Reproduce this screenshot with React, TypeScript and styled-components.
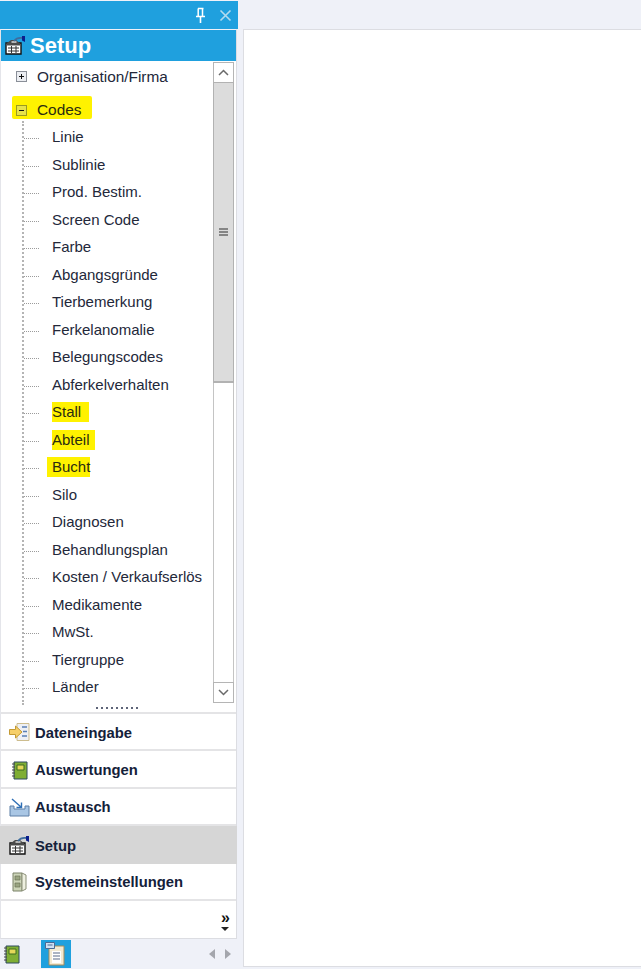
import React from 'react'
import styled, { createGlobalStyle } from 'styled-components'

const GlobalStyle = createGlobalStyle`
  html, body {
    margin: 0;
    padding: 0;
    background: #fff;
  }
  * {
    box-sizing: border-box;
  }
`

const Page = styled.div`
  width: 641px;
  height: 972px;
  display: flex;
  flex-direction: column;
  background: #fff;
  font-family: 'Liberation Sans', Arial, sans-serif;
  overflow: hidden;
`

const Desktop = styled.div`
  height: 969px;
  display: flex;
  background: #eff1f8;
`

const Sidebar = styled.div`
  width: 238px;
  display: flex;
  flex-direction: column;
`

const TitleBar = styled.div`
  height: 28px;
  margin-top: 1px;
  display: flex;
  align-items: center;
  justify-content: flex-end;
  gap: 13px;
  padding-right: 6px;
  background: #1fa0de;
`

const Panel = styled.div`
  height: 910px;
  margin-right: 1px;
  display: flex;
  flex-direction: column;
  background: #fff;
  border: 1px solid #dcdde2;
  border-top: 1px solid #eff1f8;
  border-left: 1px solid #e4e5ea;
`

const Header = styled.div`
  height: 31px;
  flex: none;
  display: flex;
  align-items: center;
  gap: 4px;
  padding-left: 4px;
  background: #1fa0de;
  color: #fff;
  font-size: 22px;
  font-weight: 700;
`

const TreeArea = styled.div`
  height: 653px;
  flex: none;
  position: relative;
  display: flex;
  overflow: hidden;
  border-bottom: 2px solid #e4e4e6;
`

const Tree = styled.div`
  flex: 1;
  min-width: 0;
  padding-top: 2px;
`

const RootRow = styled.div<{ $top?: number }>`
  height: 27px;
  margin-top: ${p => p.$top ?? 0}px;
  display: flex;
  align-items: center;
  padding-left: 15px;
  gap: 10px;
  font-size: 15.4px;
  color: #23283a;
`

const MarkedRoot = styled(RootRow)`
  width: 80px;
  height: 23px;
  margin-left: 11px;
  padding: 5px 0 0 4px;
  background: #fff200;
  border-radius: 2px;
  color: #2b2c10;
`

const Expander = styled.span<{ $marked?: boolean }>`
  position: relative;
  width: 11px;
  height: 11px;
  flex: none;
  border: 1px solid ${p => (p.$marked ? '#9a9a20' : '#8a8f98')};
  background: ${p => (p.$marked ? '#e6e24a' : '#eceef2')};
`

const Minus = styled.span`
  position: absolute;
  left: 2px;
  top: 4px;
  width: 5px;
  height: 1px;
  background: #111;
`

const Plus = styled(Minus)`
  &::after {
    content: '';
    position: absolute;
    left: 2px;
    top: -2px;
    width: 1px;
    height: 5px;
    background: #111;
  }
`

const Leaves = styled.div`
  margin: 2px 0 0 21px;
  border-left: 2px dotted #b4b4b4;
  height: 584px;
  padding-top: 2.5px;
`

const Leaf = styled.div`
  height: 27.5px;
  display: flex;
  align-items: center;
  font-size: 15px;
  color: #23283a;
  white-space: nowrap;
`

const Branch = styled.span`
  width: 15px;
  height: 1px;
  flex: none;
  margin: 3px 13px 0 0;
  border-bottom: 1px dotted #9b9b9b;
`

const LeafLabel = styled.span<{ $marked?: boolean; $offset?: number; $extra?: number }>`
  padding: 1px ${p => p.$extra ?? 0}px 2px 0;
  margin-left: ${p => p.$offset ?? 0}px;
  padding-left: ${p => -(p.$offset ?? 0)}px;
  background: ${p => (p.$marked ? '#fff200' : 'transparent')};
  color: ${p => (p.$marked ? '#2b2c10' : 'inherit')};
`

const Scrollbar = styled.div`
  width: 21px;
  height: 641px;
  margin: 1px 2px 0 0;
  flex: none;
  display: flex;
  flex-direction: column;
`

const ScrollButton = styled.div`
  height: 21px;
  flex: none;
  display: flex;
  align-items: center;
  justify-content: center;
  background: #fff;
  border: 1px solid #b5b5b5;
  color: #6a6a6a;
`

const Thumb = styled.div`
  height: 301px;
  flex: none;
  display: flex;
  flex-direction: column;
  align-items: center;
  justify-content: center;
  gap: 1px;
  margin-top: -1px;
  background: #dcdcdc;
  border: 1px solid #b2b2b2;
  border-bottom-width: 2px;
`

const Grip = styled.span`
  width: 9px;
  height: 2px;
  background: #858585;
`

const Track = styled.div`
  flex: 1;
  border-left: 1px solid #c4c4c4;
  border-right: 1px solid #c4c4c4;
`

const DragHandle = styled.div`
  position: absolute;
  left: 95px;
  bottom: 3px;
  width: 44px;
  height: 2px;
  background: repeating-linear-gradient(90deg, #5d6478 0 2px, transparent 2px 5px);
`

const NavRow = styled.div<{ $active?: boolean }>`
  height: 37.4px;
  flex: none;
  display: flex;
  align-items: center;
  gap: 5px;
  padding-top: 2px;
  margin: ${p => (p.$active ? '0 -1px 0 -1px' : '0')};
  padding-left: ${p => (p.$active ? 9 : 8)}px;
  background: ${p => (p.$active ? '#d6d6d6' : '#fff')};
  border-bottom: ${p => (p.$active ? 'none' : '2px solid #e4e4e6')};
  font-size: 14.8px;
  font-weight: 700;
  color: #14213a;
`

const NavIcon = styled.span`
  width: 21px;
  height: 21px;
  flex: none;
  display: flex;
  align-items: center;
  justify-content: center;
`

const MoreRow = styled.div`
  flex: 1;
  display: flex;
  flex-direction: column;
  align-items: flex-end;
  justify-content: flex-end;
  padding: 0 6px 7px 0;
`

const MoreChevrons = styled.span`
  font-size: 16px;
  font-weight: 700;
  line-height: 10px;
  color: #111;
`

const MoreArrow = styled.span`
  margin: 4px 1px 0 0;
  border-left: 4px solid transparent;
  border-right: 4px solid transparent;
  border-top: 4px solid #222;
`

const StatusBar = styled.div`
  height: 30px;
  display: flex;
  align-items: center;
  padding-left: 3px;
`

const StatusTab = styled.div`
  width: 30px;
  height: 28px;
  margin-left: 21px;
  display: flex;
  align-items: center;
  justify-content: center;
  padding-right: 3px;
  background: #1fa0de;
`

const Arrows = styled.div`
  margin-left: auto;
  display: flex;
  gap: 10px;
  padding-right: 7px;
`

const ArrowLeft = styled.span`
  border-top: 5px solid transparent;
  border-bottom: 5px solid transparent;
  border-right: 6px solid #a4a6ad;
`

const ArrowRight = styled.span`
  border-top: 5px solid transparent;
  border-bottom: 5px solid transparent;
  border-left: 6px solid #a4a6ad;
`

const Workspace = styled.div`
  flex: 1;
  display: flex;
  flex-direction: column;
  padding: 29px 0 2px 5px;
`

const Document = styled.div`
  flex: 1;
  background: #fff;
  border: 1px solid #dcdde2;
  border-right: none;
`

const PinIcon = () => (
  <svg width="11" height="16" viewBox="0 0 11 16">
    <path d="M3 1.500h5.500M3.200 1.500v8M7.500 1.500v8" stroke="#fff" strokeWidth="1.5" fill="none" />
    <path d="M1 9.500h9M5.500 10v6" stroke="#fff" strokeWidth="1.6" fill="none" />
  </svg>
)

const CloseIcon = () => (
  <svg width="13" height="13" viewBox="0 0 13 13">
    <path d="M1.500 1.500l10 10M11.500 1.500l-10 10" stroke="#b4dbee" strokeWidth="1.6" fill="none" />
  </svg>
)

const SetupIcon = () => (
  <svg width="21" height="19" viewBox="0 0 21 19">
    <path d="M1 7h15v11H1z" fill="#fff" stroke="#111" strokeWidth="1.4" />
    <path d="M1.500 7.500L6 4h5l4 3.500v2H1.500z" fill="#4a4a4a" />
    <path d="M6.500 6h5" stroke="#fff" strokeWidth="1.2" />
    <path d="M3 12h11M3 15h11M6.500 10v7M11 10v7" stroke="#333" strokeWidth="1" fill="none" />
    <path d="M9 5c2-2.500 5-3.500 8-3" stroke="#3e6d9e" strokeWidth="1.8" fill="none" />
    <path d="M17 0h3v6l-3-1.500z" fill="#0b1f8c" />
  </svg>
)

const EntryIcon = () => (
  <svg width="21" height="19" viewBox="0 0 21 19">
    <path d="M8 .5h12v17H8z" fill="#eef0f4" stroke="#cdbd8e" />
    <path d="M13 4h5M14 8.500h4M13 13h5" stroke="#5a7fb5" strokeWidth="1.4" />
    <path d="M.5 6.500h6V3l6.500 6-6.500 6v-3.500h-6z" fill="#f6cf6a" stroke="#c39a35" />
  </svg>
)

const BookIcon = () => (
  <svg width="17" height="19" viewBox="0 0 17 19">
    <path d="M3 1h13v17H3z" fill="#7fae34" stroke="#2f4a5e" />
    <path d="M6 4h7v5H6z" fill="#e4d85a" stroke="#3d6a20" />
    <path d="M1 3h3M1 6h3M1 9h3M1 12h3M1 15h3" stroke="#444" strokeWidth="1" />
  </svg>
)

const ExchangeIcon = () => (
  <svg width="21" height="19" viewBox="0 0 21 19">
    <path d="M1 8h4v3h11V8h4v10H1z" fill="#a9c6e4" stroke="#5c7ea6" />
    <path d="M3 1l9 8M7.500 9.500h5V4.500" stroke="#2f6fb5" strokeWidth="1.4" fill="none" />
  </svg>
)

const CabinetIcon = () => (
  <svg width="17" height="20" viewBox="0 0 17 20">
    <path d="M2 1h9v18H2z" fill="#ccd4b8" stroke="#7a8268" />
    <path d="M11 1l4 2v14l-4 2z" fill="#eef0e0" stroke="#8a8f78" />
    <path d="M4 4h5v4H4zM4 11h5v4H4z" fill="#9aa582" stroke="#6a7258" strokeWidth=".7" />
  </svg>
)

const ClipboardIcon = () => (
  <svg width="20" height="24" viewBox="0 0 20 24">
    <path d="M4 4h15v19H4z" fill="#f3ead2" stroke="#a58a58" />
    <path d="M7 9h9v12H7z" fill="#fff" />
    <path d="M8 11h7M8 14h7M8 17h7" stroke="#5b6a88" strokeWidth="1.2" />
    <path d="M.5 .5h9v6h-9z" fill="#cfe0f2" stroke="#4b6a95" />
    <path d="M2.500 3h5" stroke="#4b6a95" />
  </svg>
)

const leaves = [
  { label: 'Linie' },
  { label: 'Sublinie' },
  { label: 'Prod. Bestim.' },
  { label: 'Screen Code' },
  { label: 'Farbe' },
  { label: 'Abgangsgründe' },
  { label: 'Tierbemerkung' },
  { label: 'Ferkelanomalie' },
  { label: 'Belegungscodes' },
  { label: 'Abferkelverhalten' },
  { label: 'Stall', marked: true, extra: 8 },
  { label: 'Abteil', marked: true, extra: 5 },
  { label: 'Bucht', marked: true, offset: -5 },
  { label: 'Silo' },
  { label: 'Diagnosen' },
  { label: 'Behandlungsplan' },
  { label: 'Kosten / Verkaufserlös' },
  { label: 'Medikamente' },
  { label: 'MwSt.' },
  { label: 'Tiergruppe' },
  { label: 'Länder' },
]

const navItems = [
  { label: 'Dateneingabe', icon: <EntryIcon /> },
  { label: 'Auswertungen', icon: <BookIcon /> },
  { label: 'Austausch', icon: <ExchangeIcon /> },
  { label: 'Setup', icon: <SetupIcon />, active: true },
  { label: 'Systemeinstellungen', icon: <CabinetIcon /> },
]

const App = () => (
  <Page>
    <GlobalStyle />
    <Desktop>
      <Sidebar>
        <TitleBar>
          <PinIcon />
          <CloseIcon />
        </TitleBar>
        <Panel>
          <Header>
            <SetupIcon />
            Setup
          </Header>
          <TreeArea>
            <Tree>
              <RootRow>
                <Expander><Plus /></Expander>
                Organisation/Firma
              </RootRow>
              <MarkedRoot $top={6}>
                <Expander $marked><Minus /></Expander>
                Codes
              </MarkedRoot>
              <Leaves>
                {leaves.map(leaf => (
                  <Leaf key={leaf.label}>
                    <Branch />
                    <LeafLabel $marked={leaf.marked} $offset={leaf.offset} $extra={leaf.extra}>{leaf.label}</LeafLabel>
                  </Leaf>
                ))}
              </Leaves>
            </Tree>
            <Scrollbar>
              <ScrollButton>
                <svg width="11" height="7" viewBox="0 0 11 7">
                  <path d="M1 6l4.500-4.500L10 6" stroke="currentColor" strokeWidth="1.500" fill="none" />
                </svg>
              </ScrollButton>
              <Thumb>
                <Grip />
                <Grip />
                <Grip />
              </Thumb>
              <Track />
              <ScrollButton>
                <svg width="11" height="7" viewBox="0 0 11 7">
                  <path d="M1 1l4.500 4.500L10 1" stroke="currentColor" strokeWidth="1.500" fill="none" />
                </svg>
              </ScrollButton>
            </Scrollbar>
            <DragHandle />
          </TreeArea>
          {navItems.map(item => (
            <NavRow key={item.label} $active={item.active}>
              <NavIcon>{item.icon}</NavIcon>
              {item.label}
            </NavRow>
          ))}
          <MoreRow>
            <MoreChevrons>»</MoreChevrons>
            <MoreArrow />
          </MoreRow>
        </Panel>
        <StatusBar>
          <BookIcon />
          <StatusTab>
            <ClipboardIcon />
          </StatusTab>
          <Arrows>
            <ArrowLeft />
            <ArrowRight />
          </Arrows>
        </StatusBar>
      </Sidebar>
      <Workspace>
        <Document />
      </Workspace>
    </Desktop>
  </Page>
)

export default App
